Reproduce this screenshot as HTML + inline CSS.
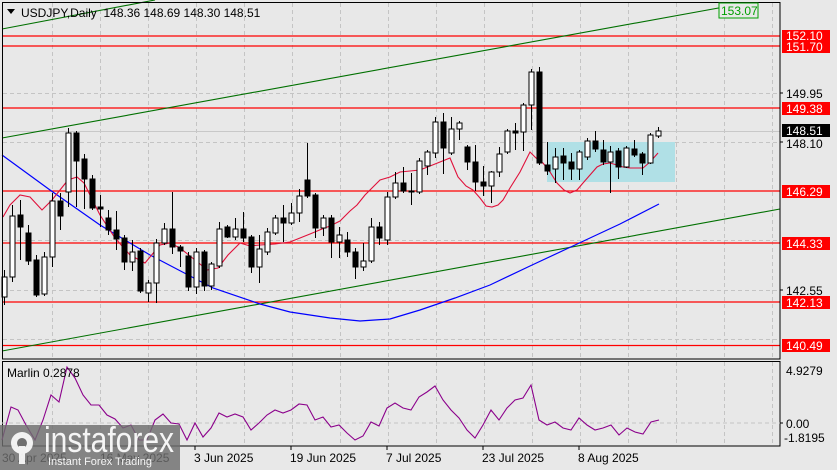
<!DOCTYPE html>
<html><head><meta charset="utf-8"><style>
html,body{margin:0;padding:0;background:#e8e8e8;width:837px;height:470px;overflow:hidden}
svg{display:block}
text{font-family:"Liberation Sans",sans-serif;font-size:12px}
</style></head><body>
<svg id="s" width="837" height="470" viewBox="0 0 837 470" xmlns="http://www.w3.org/2000/svg">
<rect width="837" height="470" fill="#e8e8e8"/>
<g id="grid" stroke="#c4c4c4" stroke-dasharray="4,3" stroke-width="1"></g>
<line x1="2" y1="131.5" x2="780" y2="131.5" stroke="#c8c8c8"/>
<rect x="547" y="142" width="128" height="40" fill="#b0e0e6"/>
<g stroke="#ff0000" stroke-width="1.3">
<line x1="2" y1="36" x2="780" y2="36"/><line x1="2" y1="46" x2="780" y2="46"/>
<line x1="2" y1="108" x2="780" y2="108"/><line x1="2" y1="191" x2="780" y2="191"/>
<line x1="2" y1="243" x2="780" y2="243"/><line x1="2" y1="302" x2="780" y2="302"/>
<line x1="2" y1="345.5" x2="780" y2="345.5"/>
</g>
<g stroke="#007000" stroke-width="1.1">
<line x1="2" y1="138" x2="735" y2="5"/>
<line x1="2" y1="29" x2="155" y2="0"/>
<line x1="2" y1="351" x2="780" y2="209"/>
</g>
<polyline fill="none" stroke="#0000ff" stroke-width="1.2" points="2,155 50,190 100,225 150,255 213,288 260,304 290,312 330,318 360,321 390,319 420,310 455,298 490,285 530,266 575,245 620,224 659,204"/>
<polyline fill="none" stroke="#e0103a" stroke-width="1.1" points="3,217 10,205 20,195 30,197 42,210 52,200 60,190 68,180 77,177 84,183 90,195 100,215 115,238 130,255 145,263 160,245 170,243 180,248 190,256 200,264 207,270 218,268 228,255 240,243 250,246 260,245 275,244 290,242 300,238 310,234 322,229 330,226 340,221 345,216 350,211 357,205 365,195 372,188 380,180 390,177 400,172 410,171 420,170 430,166 440,162 450,158 458,177 466,186 473,190 480,198 486,206 492,207 498,205 503,200 510,188 520,172 530,152 536,158 543,163 550,172 557,183 564,190 570,193 577,190 583,183 590,175 597,167 603,164 610,163 617,165 623,167 630,168 643,168 650,162 658,153"/>
<g id="candles" stroke="#000" stroke-width="1"></g>
<rect x="2.5" y="2.5" width="777.5" height="356.5" fill="none" stroke="#000"/>
<rect x="2.5" y="361.5" width="777.5" height="84.5" fill="none" stroke="#000"/>
<line x1="2" y1="423" x2="780" y2="423" stroke="#c4c4c4" stroke-dasharray="4,3"/>
<polyline fill="none" stroke="#8b008b" stroke-width="1.1" points="2,440 11,407 18,410 26,425 35,440 43,420 51,395 59,402 67,367 75,378 83,395 91,405 99,405 107,415 115,419 123,428 131,425 139,440 147,440 155,420 163,414 171,423 179,424 187,440 195,423 203,437 211,428 219,413 227,417 235,414 243,417 251,430 259,423 267,415 275,410 283,413 291,410 299,404 307,405 315,420 323,417 331,427 339,425 347,433 355,440 363,436 371,422 379,426 387,408 395,403 403,408 411,410 419,397 427,392 435,386 443,400 451,410 459,418 467,430 475,438 483,425 491,410 499,420 507,408 515,400 523,398 531,385 539,420 547,425 555,422 563,428 571,430 579,418 587,425 595,430 603,428 611,425 619,435 627,428 635,432 643,434 651,422 659,420"/>
<polygon points="7,9 15,9 11,14" fill="#000"/>
<text x="21" y="17" fill="#000">USDJPY,Daily&#160; 148.36 148.69 148.30 148.51</text>
<text x="7" y="377" fill="#000">Marlin 0.2878</text>
<rect x="719" y="3" width="39" height="15" fill="#e8e8e8" stroke="#00a000"/>
<text x="721" y="15" fill="#00a000">153.07</text>
<g fill="#ff0000">
<rect x="782" y="30" width="48" height="12"/><rect x="782" y="40" width="48" height="13"/>
<rect x="782" y="102" width="48" height="13"/><rect x="782" y="185" width="48" height="13"/>
<rect x="782" y="237" width="48" height="13"/><rect x="782" y="296" width="48" height="13"/>
<rect x="782" y="339" width="48" height="13"/>
</g>
<rect x="782" y="124" width="48" height="13" fill="#000"/>
<g fill="#fff">
<text x="786" y="40">152.10</text><text x="786" y="51">151.70</text>
<text x="786" y="113">149.38</text><text x="786" y="135">148.51</text>
<text x="786" y="196">146.29</text><text x="786" y="248">144.33</text>
<text x="786" y="307">142.13</text><text x="786" y="350">140.49</text>
</g>
<g fill="#000">
<text x="786" y="98">149.95</text><text x="786" y="148">148.10</text>
<text x="786" y="295">142.55</text>
<text x="786" y="375">4.9279</text><text x="786" y="428">0.00</text><text x="784" y="442">-1.8195</text>
<text x="2" y="462">30 Apr 2025</text><text x="100" y="462">16 May 2025</text>
<text x="194" y="462">3 Jun 2025</text><text x="290" y="462">19 Jun 2025</text>
<text x="386" y="462">7 Jul 2025</text><text x="482" y="462">23 Jul 2025</text>
<text x="578" y="462">8 Aug 2025</text>
</g>
<g stroke="#000"><line x1="780" y1="93" x2="783" y2="93"/><line x1="780" y1="142" x2="783" y2="142"/><line x1="780" y1="290" x2="783" y2="290"/><line x1="780" y1="423" x2="783" y2="423"/>
<line x1="195" y1="446" x2="195" y2="450"/><line x1="291" y1="446" x2="291" y2="450"/><line x1="387" y1="446" x2="387" y2="450"/><line x1="483" y1="446" x2="483" y2="450"/><line x1="579" y1="446" x2="579" y2="450"/></g>
<rect x="0" y="425" width="180" height="45" fill="#6e6e6e" opacity="0.82"/>
<g fill="#fff" opacity="0.9">
<circle cx="22" cy="443" r="11"/>
<circle cx="22" cy="443" r="5" fill="#6e6e6e"/>
<rect x="19" y="446" width="6" height="18"/>
</g>
<text x="44" y="452" fill="#fff" style="font-size:36px" opacity="0.92" textLength="130" lengthAdjust="spacingAndGlyphs">instaforex</text>
<text x="48" y="465" fill="#fff" style="font-size:11px" opacity="0.92">Instant Forex Trading</text>
</svg>
<script>
var ns="http://www.w3.org/2000/svg";
var g=document.getElementById("grid");
function ln(p,a){var e=document.createElementNS(ns,"line");for(var k in a)e.setAttribute(k,a[k]);p.appendChild(e);}
for(var x=52;x<780;x+=48){ln(g,{x1:x+.5,y1:3,x2:x+.5,y2:358});ln(g,{x1:x+.5,y1:362,x2:x+.5,y2:445});}
[93,142,240,290,339].forEach(function(y){ln(g,{x1:3,y1:y+.5,x2:780,y2:y+.5});});
var d=[
["W",277,297,270,305],["W",216,277,205,282],["B",215,227,200,260],["B",233,261,225,265],["B",260,295,255,297],["W",257,294,252,296],["W",201,257,193,267],["B",201,216,193,230],["W",133,192,128,207],["B",133,161,131,207],
["B",159,179,154,209],["B",179,208,175,210],["B",207,209,195,227],["B",218,230,210,235],["B",230,239,211,250],["B",238,262,235,270],["W",252,262,240,271],["B",251,291,248,293],["W",283,293,280,302],["W",243,283,239,303],
["W",229,243,223,245],["B",229,247,192,254],["B",247,251,245,267],["B",256,287,252,291],["W",252,287,248,294],["B",252,286,250,291],["W",264,286,262,290],["W",229,266,222,268],["B",227,237,225,238],["W",229,237,218,240],
["B",229,238,212,242],["B",237,267,235,273],["W",249,267,235,283],["W",232,252,228,255],["W",218,233,215,235],["B",218,223,205,242],["W",213,223,203,225],["W",196,213,189,222],["B",180,196,143,198],["B",195,228,193,238],
["W",218,228,215,236],["B",218,242,215,258],["W",235,242,227,258],["B",240,252,232,257],["B",252,267,248,279],["W",261,267,243,271],["W",227,261,218,263],["B",227,238,222,245],["W",197,240,192,245],["W",183,197,172,199],
["B",183,191,167,193],["B",191,192,173,205],["W",161,192,158,194],["W",152,166,150,175],["W",122,153,117,158],["B",122,148,113,174],["W",129,153,117,155],["W",123,129,121,140],["B",147,162,145,170],["B",162,182,145,191],
["B",182,186,166,196],["W",172,186,171,203],["W",154,172,147,177],["W",131,152,129,154],["B",131,133,123,150],["W",105,132,103,151],["W",72,105,69,130],["B",72,163,67,165],["B",165,171,142,175],["W",157,169,148,183],
["B",156,163,148,180],["B",162,169,153,180],["W",152,169,150,180],["W",141,157,138,160],["B",141,149,131,152],["B",150,162,140,165],["W",152,162,146,193],["B",151,167,148,179],["W",148,167,146,168],["B",149,155,140,157],
["B",154,163,152,175],["W",135,163,133,164],["W",131,136,127,138]];
var c=document.getElementById("candles");
d.forEach(function(v,i){var x=Math.round(4+7.98*i)+.5;
ln(c,{x1:x,y1:v[3],x2:x,y2:v[4]});
var r=document.createElementNS(ns,"rect");r.setAttribute("x",x-2.5);r.setAttribute("y",v[1]);r.setAttribute("width",5);r.setAttribute("height",Math.max(1,v[2]-v[1]));r.setAttribute("fill",v[0]=="W"?"#fff":"#000");c.appendChild(r);});
</script>
</body></html>
